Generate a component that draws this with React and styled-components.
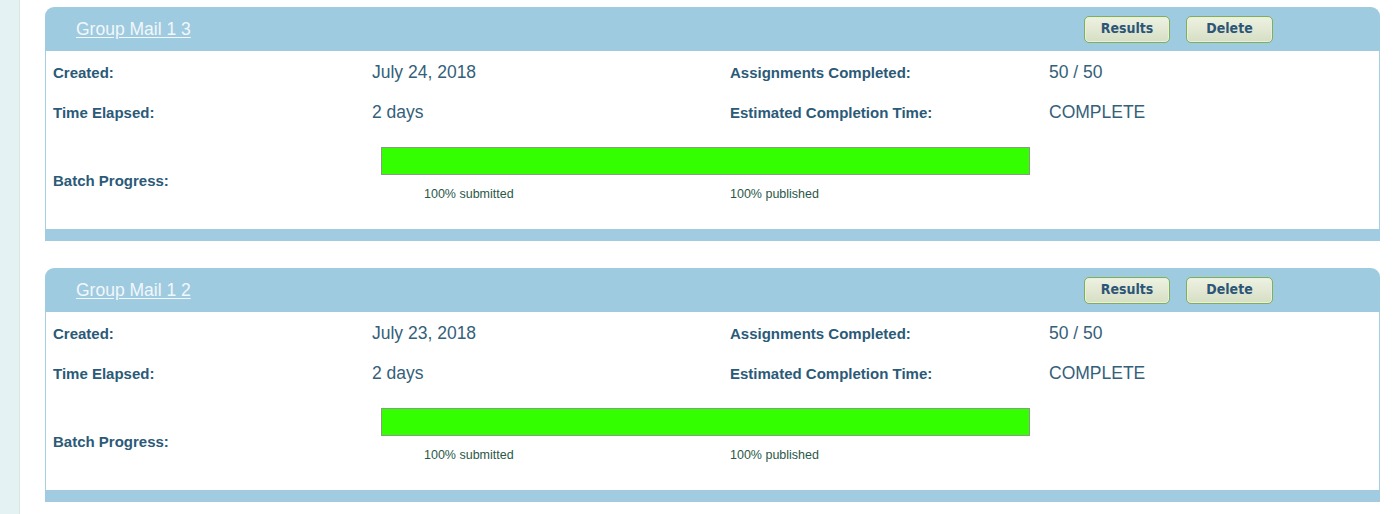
import React from "react";
import styled, { createGlobalStyle } from "styled-components";

const GlobalStyle = createGlobalStyle`
  html, body {
    margin: 0;
    padding: 0;
    background: #ffffff;
    font-family: "Liberation Sans", Arial, sans-serif;
  }
`;

const Page = styled.div`
  display: flex;
  min-height: 514px;
`;

const SideStrip = styled.div`
  width: 19px;
  flex-shrink: 0;
  background: #e4f2f4;
  border-right: 1px solid #d6ead9;
`;

const Main = styled.div`
  flex: 1;
  padding: 7px 20px 0 25px;
  display: flex;
  flex-direction: column;
  gap: 27px;
`;

const Card = styled.div`
  width: 1335px;
`;

const Header = styled.div`
  height: 44px;
  box-sizing: border-box;
  background: #9fcbe0;
  border-radius: 9px 9px 0 0;
  display: flex;
  align-items: center;
  padding: 0 107px 0 31px;
`;

const Title = styled.a`
  color: #f2f7fb;
  font-size: 17.5px;
  text-decoration: underline;
  text-underline-offset: 2px;
  cursor: pointer;
`;

const Buttons = styled.div`
  margin-left: auto;
  display: flex;
  gap: 16px;
  margin-top: 1px;
`;

const Button = styled.button`
  width: ${({ $w }) => $w}px;
  height: 27px;
  border: 1px solid #7fb058;
  border-radius: 5px;
  background: linear-gradient(#eef2e2, #d6dec4);
  box-shadow: inset 0 0 0 1px #e9eedd;
  font-family: "DejaVu Sans Condensed", "DejaVu Sans", sans-serif;
  font-weight: bold;
  font-size: 14px;
  color: #2c5576;
  padding: 0 0 3px;
  cursor: pointer;
`;

const Body = styled.div`
  background: #ffffff;
  border-left: 1px solid #a6cfe1;
  border-right: 1px solid #a6cfe1;
  display: grid;
  grid-template-columns: 319px 358px 319px 1fr;
  grid-auto-rows: 40px;
  padding: 1px 0 0 7px;
  height: 178px;
  box-sizing: border-box;
`;

const Label = styled.div`
  display: flex;
  align-items: center;
  font-weight: bold;
  font-size: 15px;
  color: #2b5a78;
`;

const Value = styled.div`
  display: flex;
  align-items: center;
  padding-top: 1px;
  font-size: 17.5px;
  color: #34607a;
`;

const ProgressLabel = styled(Label)`
  height: 97px;
`;

const ProgressCell = styled.div`
  grid-column: 2 / 4;
  padding: 15px 0 0 9px;
  height: 97px;
  box-sizing: border-box;
`;

const Bar = styled.div`
  width: 649px;
  height: 28px;
  box-sizing: border-box;
  border: 1px solid #8b9a85;
  background: #e8e8e8;
`;

const Fill = styled.div`
  height: 100%;
  background: #33ff00;
`;

const Stats = styled.div`
  display: flex;
  padding-left: 43px;
  margin-top: 12px;
  font-size: 12.5px;
  color: #2a5848;
`;

const Stat = styled.span`
  width: ${({ $w }) => ($w ? `${$w}px` : "auto")};
`;

const Footer = styled.div`
  height: 12px;
  background: #a0cbe0;
`;

const batches = [
  { name: "Group Mail 1 3", created: "July 24, 2018", elapsed: "2 days", done: "50 / 50", eta: "COMPLETE", pct: 100 },
  { name: "Group Mail 1 2", created: "July 23, 2018", elapsed: "2 days", done: "50 / 50", eta: "COMPLETE", pct: 100 },
];

const BatchCard = ({ batch }) => (
  <Card>
    <Header>
      <Title>{batch.name}</Title>
      <Buttons>
        <Button $w={86}>Results</Button>
        <Button $w={87}>Delete</Button>
      </Buttons>
    </Header>
    <Body>
      <Label>Created:</Label>
      <Value>{batch.created}</Value>
      <Label>Assignments Completed:</Label>
      <Value>{batch.done}</Value>
      <Label>Time Elapsed:</Label>
      <Value>{batch.elapsed}</Value>
      <Label>Estimated Completion Time:</Label>
      <Value>{batch.eta}</Value>
      <ProgressLabel>Batch Progress:</ProgressLabel>
      <ProgressCell>
        <Bar>
          <Fill style={{ width: `${batch.pct}%` }} />
        </Bar>
        <Stats>
          <Stat $w={306}>{batch.pct}% submitted</Stat>
          <Stat>{batch.pct}% published</Stat>
        </Stats>
      </ProgressCell>
    </Body>
    <Footer />
  </Card>
);

export default function App() {
  return (
    <>
      <GlobalStyle />
      <Page>
        <SideStrip />
        <Main>
          {batches.map((b) => (
            <BatchCard key={b.name} batch={b} />
          ))}
        </Main>
      </Page>
    </>
  );
}
